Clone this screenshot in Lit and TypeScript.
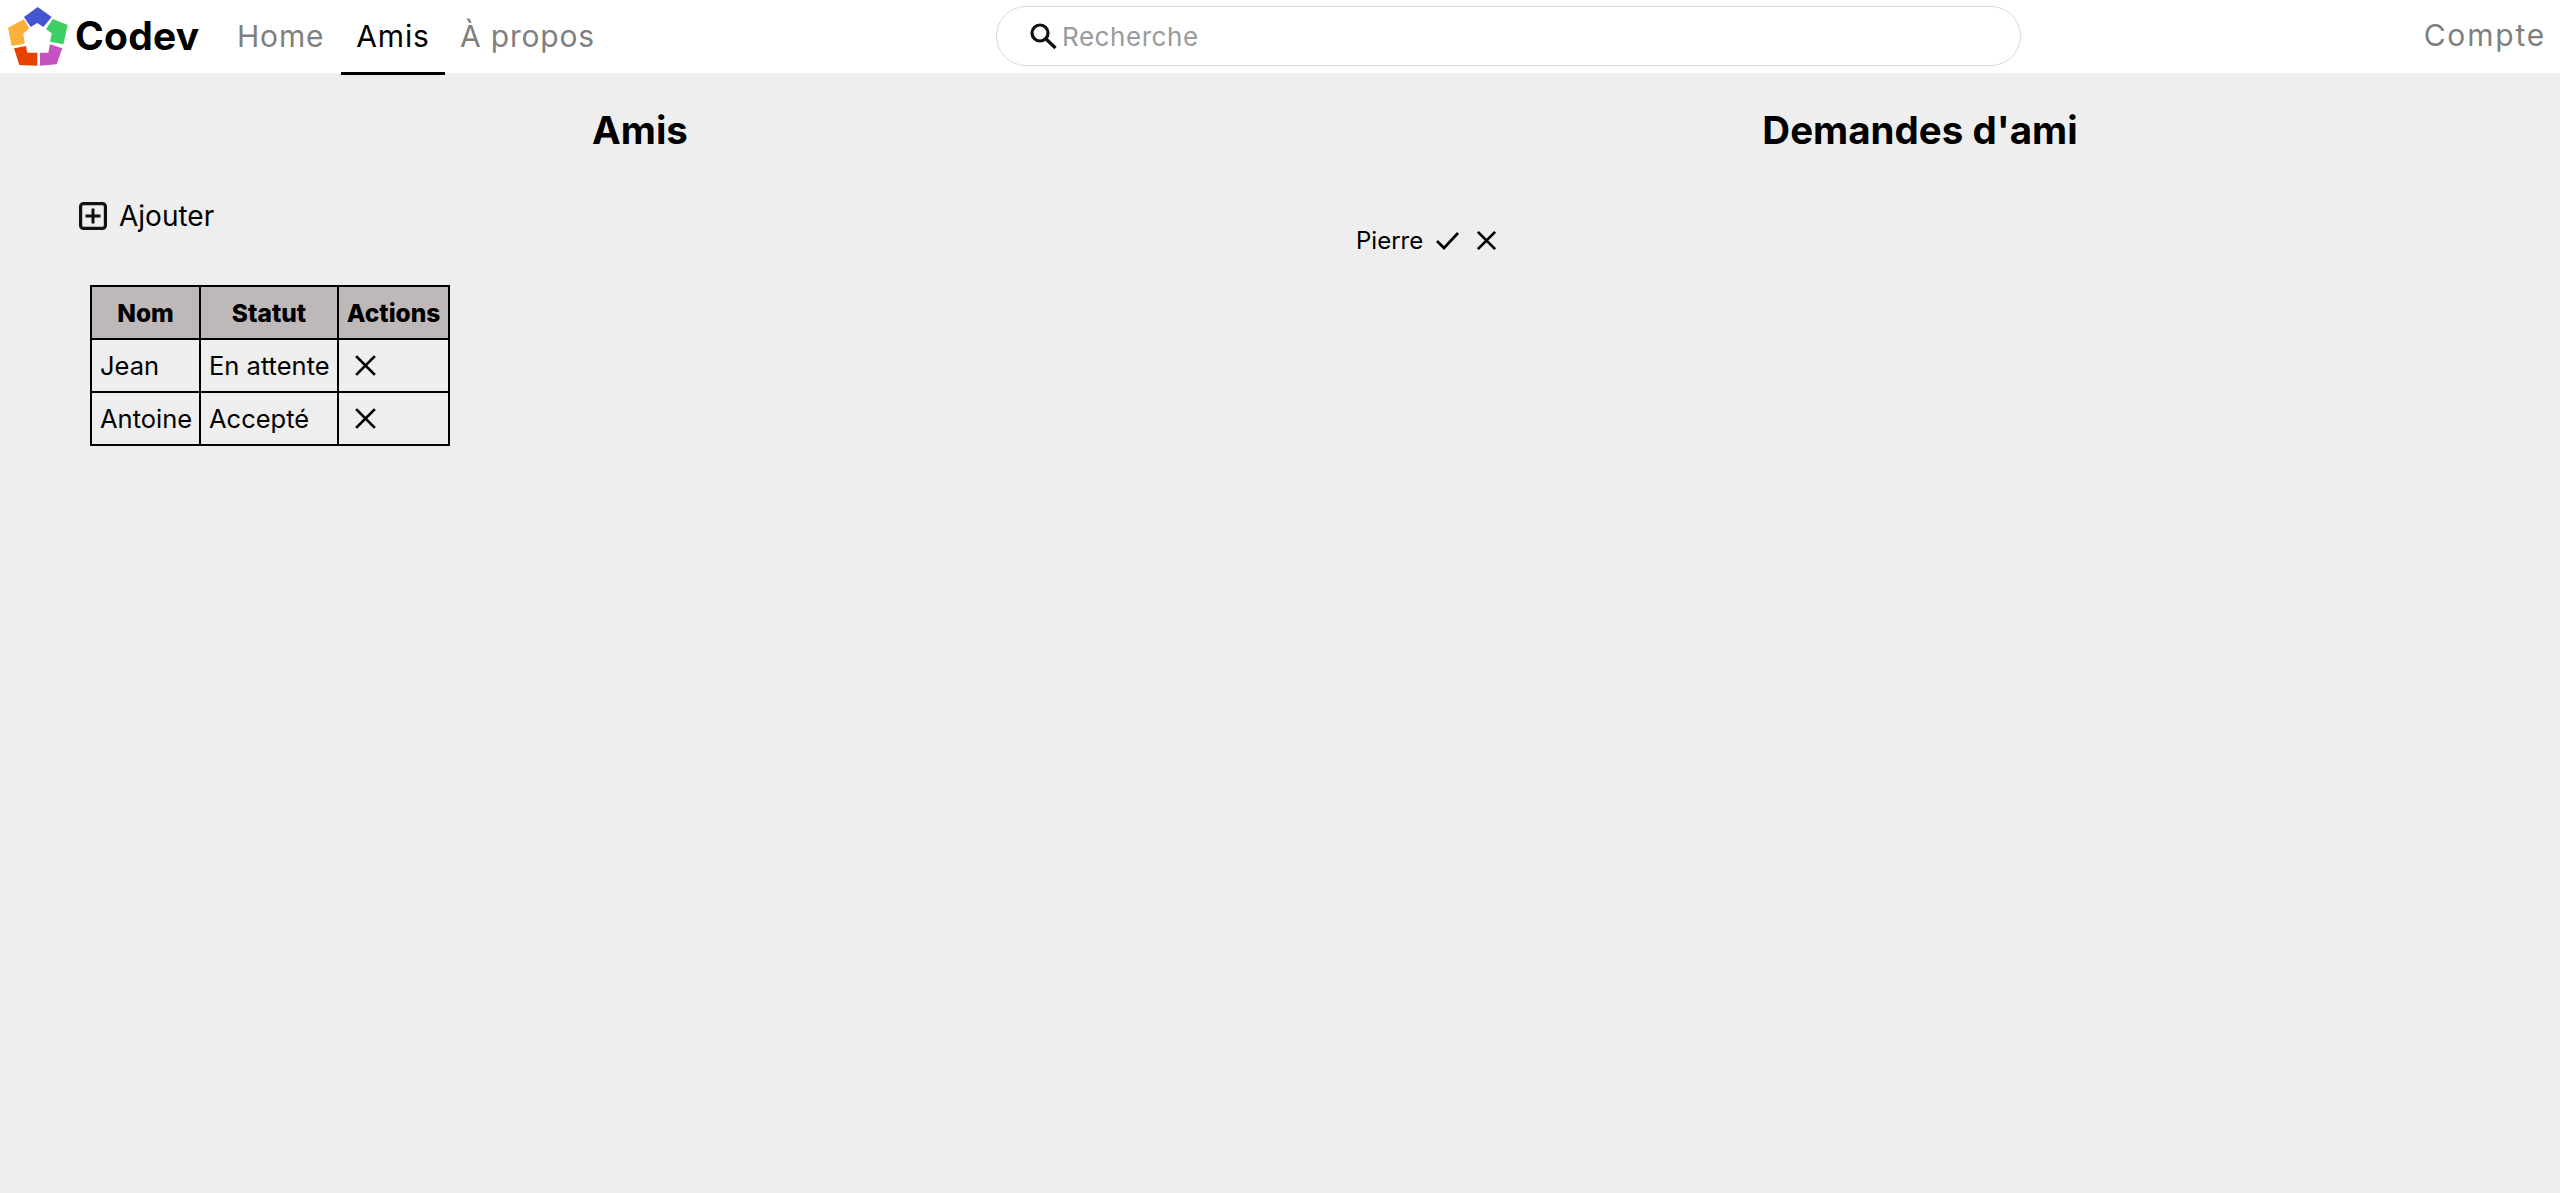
import { LitElement, html, css, svg } from "lit";
import { customElement } from "lit/decorators.js";

const xIcon = (size: number) => html`<svg class="ic" width=${size} height=${size} viewBox="0 0 24 24"><path d="M3 3 21 21M21 3 3 21" fill="none" stroke="#000" stroke-width="2.7"/></svg>`;

@customElement("app-root")
export class AppRoot extends LitElement {
  static styles = css`
    :host { display: block; min-height: 100vh; background: #eee; font-family: Inter, "Liberation Sans", sans-serif; color: #000; }
    * { box-sizing: border-box; }
    nav { height: 73px; background: #fff; display: flex; align-items: center; position: relative; }
    .logo { margin-left: 8px; display: block; flex: none; }
    .brand { font-size: 39px; font-weight: 700; margin-left: 7px; letter-spacing: 0.2px; width: 124px; white-space: nowrap; padding-bottom: 3px; }
    .links { display: flex; margin-left: 38px; height: 100%; }
    .link { font-size: 30px; letter-spacing: .8px; color: #7f7f7f; display: flex; align-items: center; height: 75px; white-space: nowrap; font-weight: 400; padding-bottom: 4px; }
    .home { width: 104px; }
    .amis { width: 104px; justify-content: center; color: #000; border-bottom: 3px solid #000; padding-bottom: 1px; }
    .apropos { margin-left: 15px; }
    .search { position: absolute; left: 996px; top: 6px; width: 1025px; height: 60px; border: 1.5px solid #d8d8d8; border-radius: 30px; display: flex; align-items: center; padding-left: 32px; background: #fff; }
    .search span { font-size: 26px; color: #9a9a9a; margin-left: 5px; letter-spacing: .55px; }
    .compte { margin-left: auto; margin-right: 14px; font-size: 30px; letter-spacing: 1.8px; color: #7f7f7f; padding-bottom: 3px; }
    main { display: grid; grid-template-columns: 1fr 1fr; }
    h1 { margin: 0; text-align: center; font-size: 38.500px; font-weight: 700; line-height: 44px; padding-top: 35px; }
    .add { display: flex; align-items: center; margin: 44px 0 0 79px; font-size: 28px; height: 40px; }
    .add svg { margin-right: 12px; }
    table { border-collapse: collapse; table-layout: fixed; width: 358px; margin: 49px 0 0 90px; font-size: 25.500px; }
    th, td { border: 2px solid #000; height: 53px; padding: 0 0 0 8px; text-align: left; white-space: nowrap; font-weight: 400; }
    th { background: #bfb8b8; font-weight: 800; text-align: center; padding: 0; font-size: 24.500px; }
    td .ic { display: block; margin-left: 6px; }
    .req { display: flex; align-items: center; margin: 68px 0 0 76px; font-size: 24px; height: 40px; }
    .req .check { margin-left: 12px; }
    .req .x { margin-left: 16px; }
  `;

  render() {
    return html`
      <nav>
        <svg class="logo" width="60" height="60" viewBox="8 6 60 60">
          ${svg`
          <polygon fill="#4355d0" points="37.7,6 51.7,16 43.3,26 37.3,22 30.7,26 24,16"/>
          <polygon fill="#3ecf64" points="52.7,18 67.7,24 63.3,43.3 50,40.7 51.7,32.3 46,28.3"/>
          <polygon fill="#fbb03b" points="24,18.3 29.3,27.3 23.3,32.7 24.7,42.7 11.7,45 8,26.7"/>
          <polygon fill="#e64100" points="14,47.3 26,45 27.3,51.7 37.3,51.7 37.3,64.7 19.3,64"/>
          <polygon fill="#c651c1" points="50,43.3 62.3,47.3 56.7,63.3 40,64.7 40,51.7 48.3,51.7"/>
          `}
        </svg>
        <div class="brand">Codev</div>
        <div class="links">
          <div class="link home">Home</div>
          <div class="link amis">Amis</div>
          <div class="link apropos">À propos</div>
        </div>
        <div class="search">
          <svg width="28" height="28" viewBox="0 0 28 28"><circle cx="11" cy="11" r="8" fill="none" stroke="#111" stroke-width="3.2"/><path d="M17 17 26.5 26" stroke="#111" stroke-width="3.4" fill="none"/></svg>
          <span>Recherche</span>
        </div>
        <div class="compte">Compte</div>
      </nav>
      <main>
        <section>
          <h1>Amis</h1>
          <div class="add">
            <svg width="28" height="28" viewBox="0 0 28 28"><rect x="1.600" y="1.600" width="24.800" height="24.800" rx="3" fill="none" stroke="#111" stroke-width="3.200"/><path d="M14 6.500v15M6.500 14h15" stroke="#111" stroke-width="3" fill="none"/></svg>
            Ajouter
          </div>
          <table>
            <colgroup><col style="width:109px"/><col style="width:138px"/><col style="width:111px"/></colgroup>
            <tr><th>Nom</th><th>Statut</th><th>Actions</th></tr>
            <tr><td>Jean</td><td>En attente</td><td>${xIcon(25)}</td></tr>
            <tr><td>Antoine</td><td>Accepté</td><td>${xIcon(25)}</td></tr>
          </table>
        </section>
        <section>
          <h1>Demandes d'ami</h1>
          <div class="req">
            Pierre
            <svg class="check" width="24" height="24" viewBox="0 0 24 24"><path d="M2 13 9 20 23 5" fill="none" stroke="#000" stroke-width="2.700"/></svg>
            <svg class="x" width="23" height="23" viewBox="0 0 24 24"><path d="M3 3 21 21M21 3 3 21" fill="none" stroke="#000" stroke-width="2.900"/></svg>
          </div>
        </section>
      </main>
    `;
  }
}
